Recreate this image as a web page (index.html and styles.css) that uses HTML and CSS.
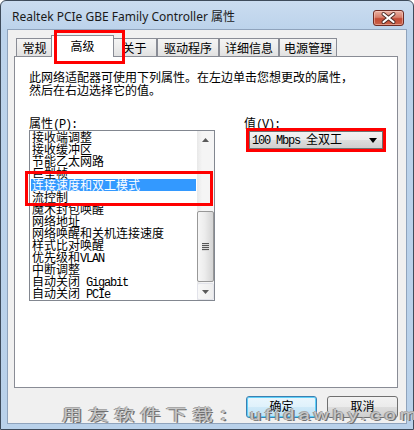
FILE: index.html
```html
<!DOCTYPE html>
<html lang="zh-CN">
<head>
<meta charset="utf-8">
<title>Realtek PCIe GBE Family Controller 属性</title>
<link rel="stylesheet" href="styles.css">
</head>
<body>
<div class="window">
  <div class="titlebar">
    <span class="title">Realtek PCIe GBE Family Controller 属性</span>
    <div class="close">
      <svg width="29" height="14" viewBox="0 0 29 14">
        <path d="M9.5 3 L19.5 11 M19.5 3 L9.5 11" stroke="#4a2a24" stroke-width="4" stroke-linecap="round"/>
        <path d="M9.5 3 L19.5 11 M19.5 3 L9.5 11" stroke="#ffffff" stroke-width="2.2" stroke-linecap="round"/>
      </svg>
    </div>
  </div>
  <div class="client">
    <div class="tabs">
      <div class="tab tab-general">常规</div>
      <div class="tab tab-advanced tab-active">高级</div>
      <div class="tab tab-about">关于</div>
      <div class="tab tab-driver">驱动程序</div>
      <div class="tab tab-details">详细信息</div>
      <div class="tab tab-power">电源管理</div>
    </div>
    <div class="panel">
      <p class="desc">此网络适配器可使用下列属性。在左边单击您想更改的属性，<br>然后在右边选择它的值。</p>
      <div class="props">
        <div class="col-left">
          <div class="label">属性<span class="lat">(P):</span></div>
          <div class="listwrap">
            <div class="listbox">
              <ul class="items">
                <li>接收端调整</li>
                <li>接收缓冲区</li>
                <li>节能乙太网路</li>
                <li>巨型帧</li>
                <li class="selected">连接速度和双工模式</li>
                <li>流控制</li>
                <li>魔术封包唤醒</li>
                <li>网络地址</li>
                <li>网络唤醒和关机连接速度</li>
                <li>样式比对唤醒</li>
                <li>优先级和<span class="lat">VLAN</span></li>
                <li>中断调整</li>
                <li>自动关闭<span class="lat"> Gigabit</span></li>
                <li>自动关闭<span class="lat"> PCIe</span></li>
              </ul>
              <div class="scrollbar">
                <div class="sb-btn">
                  <svg width="7" height="4" viewBox="0 0 7 4"><path d="M0 4 L3.5 0 L7 4 Z" fill="#5a5a5a"/></svg>
                </div>
                <div class="sb-track">
                  <div class="sb-thumb">
                    <span class="grip"></span><span class="grip"></span><span class="grip"></span><span class="grip"></span>
                  </div>
                </div>
                <div class="sb-btn sb-btn-down">
                  <svg width="7" height="4" viewBox="0 0 7 4"><path d="M0 0 L7 0 L3.5 4 Z" fill="#5a5a5a"/></svg>
                </div>
              </div>
            </div>
            <div class="mark mark-list"></div>
          </div>
        </div>
        <div class="col-right">
          <div class="label">值<span class="lat">(V):</span></div>
          <div class="combo">
            <span><span class="lat">100 Mbps </span>全双工</span>
            <svg width="8" height="5" viewBox="0 0 8 5"><path d="M0 0 L8 0 L4 5 Z" fill="#000"/></svg>
          </div>
        </div>
      </div>
    </div>
    <div class="buttons">
      <button class="btn btn-default">确定</button>
      <button class="btn">取消</button>
    </div>
    <div class="mark mark-tab"></div>
    <div class="watermark"><span class="wm-cjk">用友软件下载：</span><span class="wm-lat">ufidawhy.com</span></div>
  </div>
</div>
</body>
</html>
```
FILE: styles.css
```css
html, body {
  margin: 0;
  background: #ffffff;
}

.window {
  width: 414px;
  height: 430px;
  box-sizing: border-box;
  border: 1px solid #3e4b5b;
  border-radius: 6px 6px 0 0;
  background: linear-gradient(180deg, #cadcf0 0, #bcd3eb 28px, #b9d1ea 100%);
  padding: 0 6px 5px;
  display: flex;
  flex-direction: column;
  font-family: "Noto Sans CJK SC", sans-serif;
  font-size: 12px;
  color: #000;
}

.titlebar {
  height: 28px;
  flex: none;
  display: flex;
  justify-content: space-between;
  align-items: flex-start;
}

.title {
  font-family: "Noto Sans", "Noto Sans CJK SC", sans-serif;
  font-size: 12px;
  line-height: 16px;
  margin: 8px 0 0 5px;
  color: #1a1a1a;
}

.close {
  width: 31px;
  height: 16px;
  box-sizing: border-box;
  margin: 9px 3px 0 0;
  border: 1px solid #6e2b23;
  border-radius: 3px;
  background: linear-gradient(180deg, #eab1a3 0, #d77f6c 45%, #c24a35 55%, #c9634a 100%);
  box-shadow: inset 0 0 0 1px rgba(255, 220, 210, 0.45);
  display: flex;
  align-items: center;
  justify-content: center;
}

.client {
  position: relative;
  flex: 1;
  border: 1px solid #8fa3bc;
  background: #f0f0f0;
  padding: 8px 8px 0 6px;
  display: flex;
  flex-direction: column;
}

.tabs {
  display: flex;
  align-items: flex-end;
  height: 18px;
  padding-left: 2px;
  position: relative;
  z-index: 1;
  flex: none;
}

.tab {
  height: 18px;
  box-sizing: border-box;
  border: 1px solid #898c95;
  border-bottom: none;
  background: linear-gradient(180deg, #f4f4f4 0, #ececec 50%, #e1e1e1 100%);
  display: flex;
  align-items: center;
  justify-content: center;
  font-size: 12px;
  line-height: 14px;
  padding-top: 1px;
}

.tab-general { width: 37px; }
.tab-advanced { width: 59px; }
.tab-about { width: 45px; }
.tab-driver { width: 62px; }
.tab-details { width: 60px; }
.tab-power { width: 58px; }

.tab-active {
  position: relative;
  z-index: 2;
  width: 63px;
  height: 22px;
  margin: 0 -2px -1px;
  background: #ffffff;
  padding-top: 0;
  padding-bottom: 2px;
}

.panel {
  flex: none;
  height: 332px;
  box-sizing: border-box;
  border: 1px solid #898c95;
  background: #ffffff;
  padding: 13px 14px 0;
}

.desc {
  margin: 0;
  line-height: 13px;
  white-space: nowrap;
}

.props {
  display: flex;
  margin-top: 20px;
}

.col-left {
  width: 186px;
}

.col-right {
  margin-left: 29px;
}

.label {
  line-height: 13px;
  height: 13px;
}

.lat {
  font-family: "Liberation Mono", monospace;
  letter-spacing: -1.2px;
}

.listwrap {
  position: relative;
  margin-top: 1px;
}

.listbox {
  display: flex;
  width: 186px;
  height: 171px;
  box-sizing: border-box;
  border: 1px solid #828790;
  background: #fff;
}

.items {
  list-style: none;
  margin: 0;
  padding: 0;
  flex: 1;
  overflow: hidden;
}

.items li {
  height: 12px;
  line-height: 12px;
  margin: 0 1px;
  padding-left: 1px;
  white-space: nowrap;
}

.items li.selected {
  background: #3399ff;
  color: #ffffff;
}

.scrollbar {
  width: 17px;
  flex: none;
  display: flex;
  flex-direction: column;
  background: linear-gradient(90deg, #e8e8e8 0, #f5f5f5 30%, #f5f5f5 100%);
}

.sb-btn {
  height: 17px;
  flex: none;
  display: flex;
  align-items: center;
  justify-content: center;
}

.sb-btn-down {
  box-sizing: border-box;
  border: 1px solid #e2e3ea;
  border-radius: 2px;
  background: linear-gradient(90deg, #f8f8f8, #eeeeee);
}

.sb-track {
  flex: 1;
}

.sb-thumb {
  margin: 63px 0 0 0;
  height: 71px;
  box-sizing: border-box;
  border: 1px solid #989898;
  border-radius: 2px;
  background: linear-gradient(90deg, #f6f6f6 0, #ececec 45%, #d4d4d4 100%);
  display: flex;
  flex-direction: column;
  align-items: center;
  justify-content: center;
  gap: 1px;
}

.grip {
  display: block;
  width: 7px;
  height: 1px;
  background: #555;
  box-shadow: 0 1px 0 #d8d8d8;
}

.combo {
  width: 134px;
  height: 18px;
  box-sizing: border-box;
  margin: 2px 0 0 5px;
  border: 1px solid #707070;
  outline: 3px solid #ff0000;
  background: linear-gradient(180deg, #f2f2f2 0, #ebebeb 50%, #dddddd 51%, #cfcfcf 100%);
  display: flex;
  align-items: center;
  justify-content: space-between;
  padding: 0 5px 0 2px;
  line-height: 14px;
  white-space: nowrap;
}

.mark {
  position: absolute;
  box-sizing: border-box;
  border: 3px solid #ff0000;
  z-index: 3;
}

.mark-list {
  left: -4px;
  top: 41px;
  width: 188px;
  height: 35px;
}

.mark-tab {
  left: 46px;
  top: 0;
  width: 71px;
  height: 34px;
}

.buttons {
  display: flex;
  justify-content: flex-end;
  gap: 10px;
  margin-top: 8px;
}

.btn {
  width: 71px;
  height: 22px;
  box-sizing: border-box;
  padding: 0 0 2px;
  border: 1px solid #707070;
  border-radius: 3px;
  background: linear-gradient(180deg, #f2f2f2 0, #ebebeb 50%, #dddddd 51%, #cfcfcf 100%);
  font-family: "Noto Sans CJK SC", sans-serif;
  font-size: 12px;
  line-height: 16px;
  color: #000;
}

.btn-default {
  border-color: #3c7fb1;
  box-shadow: inset 0 0 0 1px #5fd0f8;
  background: linear-gradient(180deg, #eaf6fd 0, #dff1fb 50%, #cfe9f8 51%, #bfe2f6 100%);
}

.watermark {
  position: absolute;
  left: 54px;
  top: 376px;
  z-index: 4;
  white-space: nowrap;
  font-size: 15px;
  line-height: 16px;
  color: #c6c6c6;
  text-shadow: 1px 1px 0 #707070, -1px 0 0 #9a9a9a, 0 -1px 0 #a8a8a8;
  transform: scaleX(1.35);
  transform-origin: 0 0;
}

.wm-cjk {
  font-family: "Noto Sans CJK SC", sans-serif;
  letter-spacing: 4.3px;
}

.wm-lat {
  font-family: "Liberation Sans", sans-serif;
  letter-spacing: 3px;
  margin-left: 4px;
}
```
